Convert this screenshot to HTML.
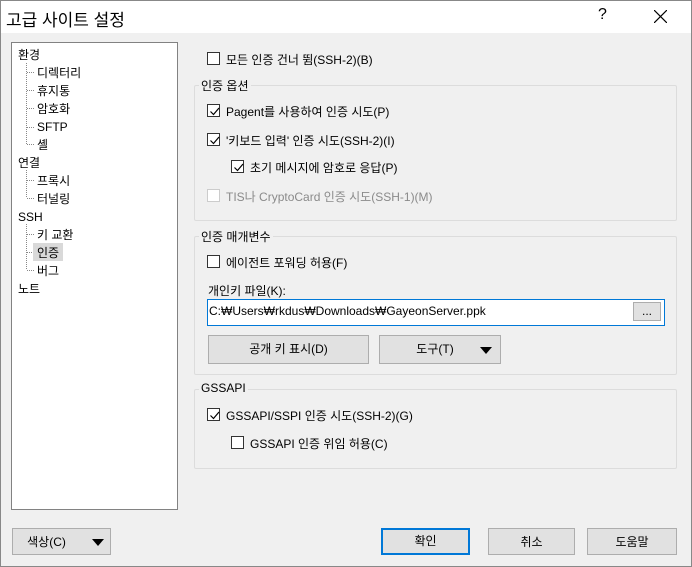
<!DOCTYPE html><html><head><style>
body{margin:0;width:692px;height:567px;background:#f0f0f0;font-family:"Liberation Sans","Noto Sans CJK KR",sans-serif;font-size:12px;color:#000;position:relative;overflow:hidden}
.a{position:absolute;white-space:nowrap}
.cb{position:absolute;width:13px;height:13px;border:1px solid #333;background:#fff;box-sizing:border-box}
.cb svg{position:absolute;left:1px;top:1px}
.grp{position:absolute;border:1px solid #dcdcdc;border-radius:2px}
.gl{position:absolute;background:#f0f0f0;padding:0 2px;top:-9px;left:4px}
.btn{position:absolute;background:#e1e1e1;border:1px solid #adadad;box-sizing:border-box;text-align:center;line-height:26px}
.tri{display:inline-block;width:0;height:0;border-left:6px solid transparent;border-right:6px solid transparent;border-top:7px solid #000}
.dot{position:absolute;border-left:1px dotted #888}
.dh{position:absolute;border-top:1px dotted #888;width:7px}
</style></head><body>
<div class="a" style="left:0;top:0;width:692px;height:33px;background:#fff"></div>
<div class="a" style="left:6px;top:6px;font-size:17px">고급 사이트 설정</div>
<div class="a" style="left:598px;top:6px;font-size:16px">?</div>
<svg class="a" style="left:654px;top:10px" width="13" height="13"><path d="M0 0L13 13M13 0L0 13" stroke="#000" stroke-width="1.2"/></svg>

<div class="a" style="left:11px;top:42px;width:165px;height:466px;background:#fff;border:1px solid #828282"></div>
<div class="dot" style="left:26px;top:63px;height:81px"></div>
<div class="dot" style="left:26px;top:170px;height:27px"></div>
<div class="dot" style="left:26px;top:224px;height:45px"></div>
<div class="dh" style="left:27px;top:72px"></div><div class="dh" style="left:27px;top:90px"></div><div class="dh" style="left:27px;top:108px"></div><div class="dh" style="left:27px;top:127px"></div><div class="dh" style="left:27px;top:144px"></div>
<div class="dh" style="left:27px;top:180px"></div><div class="dh" style="left:27px;top:198px"></div>
<div class="dh" style="left:27px;top:234px"></div><div class="dh" style="left:27px;top:252px"></div><div class="dh" style="left:27px;top:270px"></div>
<div class="a" style="left:33px;top:243px;width:30px;height:18px;background:#d9d9d9"></div>
<div class="a" style="left:18px;top:46px;line-height:18px">환경</div>
<div class="a" style="left:37px;top:64px;line-height:18px">디렉터리<br>휴지통<br>암호화<br>SFTP<br>셸</div>
<div class="a" style="left:18px;top:154px;line-height:18px">연결</div>
<div class="a" style="left:37px;top:172px;line-height:18px">프록시<br>터널링</div>
<div class="a" style="left:18px;top:208px;line-height:18px">SSH</div>
<div class="a" style="left:37px;top:226px;line-height:18px">키 교환<br>인증<br>버그</div>
<div class="a" style="left:18px;top:280px;line-height:18px">노트</div>

<div class="cb" style="left:207px;top:52px"></div><div class="a" style="left:226px;top:51px">모든 인증 건너 뜀(SSH-2)(B)</div>

<div class="grp" style="left:194px;top:85px;width:481px;height:134px"><div class="gl">인증 옵션</div></div>
<div class="cb" style="left:207px;top:104px"><svg width="11" height="11"><path d="M1.5 5.5L4.5 8.5L10 2" stroke="#000" fill="none" stroke-width="1.2"/></svg></div><div class="a" style="left:226px;top:103px">Pagent를 사용하여 인증 시도(P)</div>
<div class="cb" style="left:207px;top:133px"><svg width="11" height="11"><path d="M1.5 5.5L4.5 8.5L10 2" stroke="#000" fill="none" stroke-width="1.2"/></svg></div><div class="a" style="left:226px;top:132px">'키보드 입력' 인증 시도(SSH-2)(I)</div>
<div class="cb" style="left:231px;top:160px"><svg width="11" height="11"><path d="M1.5 5.5L4.5 8.5L10 2" stroke="#000" fill="none" stroke-width="1.2"/></svg></div><div class="a" style="left:250px;top:159px">초기 메시지에 암호로 응답(P)</div>
<div class="cb" style="left:207px;top:189px;border-color:#ccc"></div><div class="a" style="left:226px;top:188px;color:#8a8a8a">TIS나 CryptoCard 인증 시도(SSH-1)(M)</div>

<div class="grp" style="left:194px;top:236px;width:481px;height:137px"><div class="gl">인증 매개변수</div></div>
<div class="cb" style="left:207px;top:255px"></div><div class="a" style="left:226px;top:254px">에이전트 포워딩 허용(F)</div>
<div class="a" style="left:208px;top:282px">개인키 파일(K):</div>
<div class="a" style="left:207px;top:299px;width:456px;height:25px;background:#fff;border:1px solid #0078d7"></div>
<div class="a" style="left:209px;top:304px">C:₩Users₩rkdus₩Downloads₩GayeonServer.ppk</div>
<div class="btn" style="left:633px;top:302px;width:28px;height:19px;line-height:17px">...</div>
<div class="btn" style="left:208px;top:335px;width:161px;height:29px">공개 키 표시(D)</div>
<div class="btn" style="left:379px;top:335px;width:122px;height:29px"><span style="margin-left:-10px">도구(T)</span><span class="tri" style="position:absolute;right:8px;top:11px"></span></div>

<div class="grp" style="left:194px;top:389px;width:481px;height:78px"><div class="gl">GSSAPI</div></div>
<div class="cb" style="left:207px;top:408px"><svg width="11" height="11"><path d="M1.5 5.5L4.5 8.5L10 2" stroke="#000" fill="none" stroke-width="1.2"/></svg></div><div class="a" style="left:226px;top:407px">GSSAPI/SSPI 인증 시도(SSH-2)(G)</div>
<div class="cb" style="left:231px;top:436px"></div><div class="a" style="left:250px;top:435px">GSSAPI 인증 위임 허용(C)</div>

<div class="btn" style="left:12px;top:528px;width:99px;height:27px"><span style="margin-left:-30px">색상(C)</span><span class="tri" style="position:absolute;right:6px;top:10px"></span></div>
<div class="btn" style="left:381px;top:528px;width:89px;height:27px;border:2px solid #0078d7;line-height:23px">확인</div>
<div class="btn" style="left:488px;top:528px;width:87px;height:27px">취소</div>
<div class="btn" style="left:587px;top:528px;width:90px;height:27px">도움말</div>
<div class="a" style="left:0;top:0;width:690px;height:565px;border:1px solid #888"></div>
</body></html>
